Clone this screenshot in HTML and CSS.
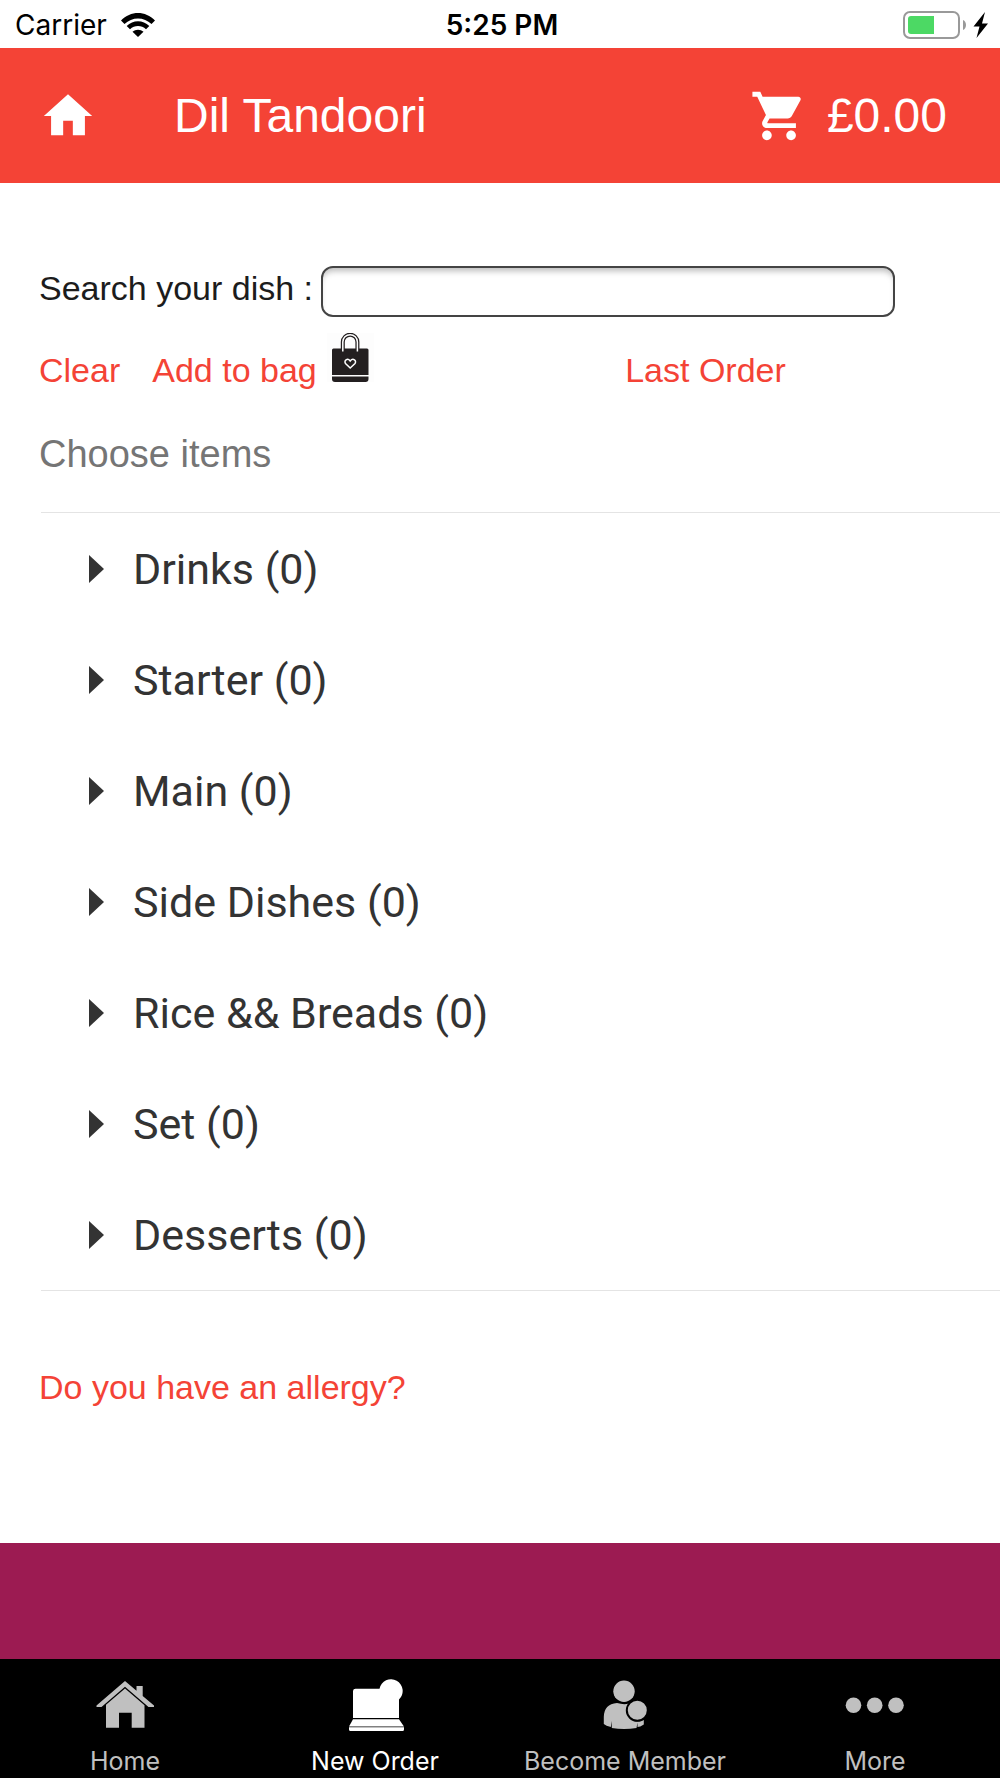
FILE: index.html
```
<!DOCTYPE html>
<html lang="en">
<head>
  <meta charset="UTF-8">
  <meta name="viewport" content="width=device-width, initial-scale=1.0">
  <title>Dil Tandoori</title>
  <link rel="stylesheet" href="styles.css">
</head>
<body>
  <div class="status-bar">
    <div class="status-left">
      <span>Carrier</span>
      <svg class="wifi" viewBox="0 0 34 24" aria-hidden="true">
        <path d="M0 7.5 C9.5 -2.5 24.500 -2.500 34 7.500 L30.500 11 C23 3.500 11 3.500 3.500 11 Z"/>
        <path d="M5.700 13 C12 6.500 22 6.500 28.300 13 L25 16.300 C20.500 12 13.500 12 9 16.300 Z"/>
        <path d="M11.500 18.700 C14.500 16 19.500 16 22.500 18.700 L17 24 Z"/>
      </svg>
    </div>
    <span class="status-time">5:25 PM</span>
    <div class="status-right">
      <svg class="battery" viewBox="0 0 86 28" aria-hidden="true">
        <rect x="1" y="1" width="55" height="26" rx="6" fill="none" stroke="#999" stroke-width="2"/>
        <path d="M31 5 V23 H8 a3 3 0 0 1 -3 -3 V8 a3 3 0 0 1 3 -3 Z" fill="#4cd964"/>
        <path d="M60 9 C64 10.500 64 17.500 60 19 Z" fill="#999"/>
        <path d="M82 1 L70.500 15.500 H76.500 L73.500 27 L85 12.500 H79 Z" fill="#000"/>
      </svg>
    </div>
  </div>

  <header class="app-header">
    <button class="home-btn" aria-label="Home">
      <svg class="icon" viewBox="0 0 24 24"><path d="M10 20v-6h4v6h5v-8h3L12 3 2 12h3v8z"/></svg>
    </button>
    <h1>Dil Tandoori</h1>
    <button class="cart-btn">
      <svg class="icon" viewBox="0 0 24 24" aria-hidden="true"><path d="M7 18c-1.100 0-1.990.9-1.990 2S5.900 22 7 22s2-.9 2-2-.9-2-2-2zM1 2v2h2l3.600 7.590-1.350 2.450c-.16.28-.25.61-.25.96 0 1.100.9 2 2 2h12v-2H7.420c-.14 0-.25-.11-.25-.25l.03-.12.9-1.630h7.450c.75 0 1.410-.41 1.750-1.030l3.580-6.490c.08-.14.12-.31.12-.48 0-.55-.45-1-1-1H5.210l-.94-2H1zm16 16c-1.100 0-1.990.9-1.990 2s.89 2 1.990 2 2-.9 2-2-.9-2-2-2z"/></svg>
      <span>£0.00</span>
    </button>
  </header>

  <main>
    <div class="search-row">
      <label for="dish">Search your dish :</label>
      <input type="text" id="dish">
    </div>
    <div class="actions">
      <div class="bag-actions">
        <a href="#">Clear</a>
        <a href="#" class="add-link">Add to bag
          <svg class="bag" viewBox="0 0 47 49" aria-hidden="true">
            <rect width="47" height="49" fill="#fdfdfd"/>
            <path d="M5 17 a1.500 1.500 0 0 1 1.500 -1.500 H40 a1.500 1.500 0 0 1 1.500 1.500 V42 H5 Z M5 43.500 H41.500 V46 a3 3 0 0 1 -3 3 H8 a3 3 0 0 1 -3 -3 Z" fill="#231f20"/>
            <path d="M15.800 18 V9 a7.200 7.200 0 0 1 14.600 0 V18" fill="none" stroke="#231f20" stroke-width="4"/>
            <path d="M15.800 18.500 V9 a7.200 7.200 0 0 1 14.600 0 V18.500" fill="none" stroke="#fff" stroke-width="1.500"/>
            <path d="M23.200 35 L18.500 30.500 C16.500 27.500 20.500 24.500 23.200 28 C26 24.500 30 27.500 28 30.500 Z" fill="none" stroke="#fff" stroke-width="1.500"/>
          </svg>
        </a>
      </div>
      <a href="#">Last Order</a>
    </div>

    <h2>Choose items</h2>
    <ul class="menu-list">
      <li><button>Drinks (0)</button></li>
      <li><button>Starter (0)</button></li>
      <li><button>Main (0)</button></li>
      <li><button>Side Dishes (0)</button></li>
      <li><button>Rice &amp;&amp; Breads (0)</button></li>
      <li><button>Set (0)</button></li>
      <li><button>Desserts (0)</button></li>
    </ul>

    <a href="#" class="allergy">Do you have an allergy?</a>
  </main>

  <div class="banner"></div>

  <nav class="tab-bar">
    <a href="#">
      <svg viewBox="0 0 64 60" aria-hidden="true">
        <path d="M32 6 L43.500 15.700 V11 H49.700 V21 L61 30.500 V32 H55.500 L32 11.700 L8.500 32 H3.500 V30.500 Z"/>
        <path d="M32 13.500 L51.500 30.300 V52.700 H38.700 V37.700 H26 V52.700 H13 V29.800 Z"/>
      </svg>
      Home
    </a>
    <a href="#" class="active">
      <svg viewBox="0 0 64 60" aria-hidden="true">
        <path d="M12.500 13.700 H36.500 A11.700 11.700 0 1 1 56 24.500 V43 H10 V16 a2.500 2.500 0 0 1 2.500 -2.300 Z"/>
        <path d="M10 44.200 H56 L61 51.500 H6 Z"/>
        <path d="M6 52.300 H61 V54.500 a1.500 1.500 0 0 1 -1.500 1.500 H7.500 a1.500 1.500 0 0 1 -1.500 -1.500 Z"/>
      </svg>
      New Order
    </a>
    <a href="#">
      <svg viewBox="0 0 64 60" aria-hidden="true">
        <path d="M24 28 Q31 30 36 28.500 A11.300 11.300 0 0 0 44 46.500 L50.800 45 V49.500 Q47 52 44.500 52 V47.500 L43.500 53 Q31 55 18.800 53 L18.500 46 L17.800 52 Q13 51 10.800 49 V42 Q11 29 24 28 Z"/>
        <circle cx="31" cy="16.300" r="10.700"/>
        <circle cx="44.300" cy="35.300" r="10.500" class="ring"/>
      </svg>
      Become Member
    </a>
    <a href="#">
      <svg viewBox="0 0 64 60" aria-hidden="true">
        <circle cx="10.500" cy="30.300" r="7.800"/>
        <circle cx="31.700" cy="30.300" r="7.800"/>
        <circle cx="53" cy="30.300" r="7.800"/>
      </svg>
      More
    </a>
  </nav>
</body>
</html>
```
FILE: styles.css
```
:root {
  --red: #f44336;
  --plum: #9c1b52;
  --side: 39px;
}
*, *::before, *::after { box-sizing: border-box; }
body {
  margin: 0;
  min-height: 100vh;
  display: flex;
  flex-direction: column;
  font-family: "Liberation Sans", Arial, sans-serif;
  font-size: 34px;
  line-height: 40px;
  color: #1c1c1c;
  background: #fff;
}
a { color: var(--red); text-decoration: none; }
button { font: inherit; color: inherit; background: none; border: none; padding: 0; cursor: pointer; }
svg { display: block; flex: none; }

/* Status bar */
.status-bar {
  display: grid;
  grid-template-columns: 1fr auto 1fr;
  align-items: center;
  height: 48px;
  padding: 2px 11px 0 15px;
  font-family: Inter, sans-serif;
  font-size: 28px;
  color: #000;
}
.status-left { display: flex; align-items: center; gap: 14px; }
.status-time { font-weight: 600; }
.status-right { display: flex; justify-content: flex-end; }
.wifi { width: 34px; height: 24px; }
.battery { width: 86px; height: 28px; }

/* Header */
.app-header {
  display: flex;
  align-items: center;
  height: 135px;
  padding: 0 53px 0 var(--side);
  background: var(--red);
  color: #fff;
  font-size: 48px;
}
.app-header h1 { flex: 1; margin: 0 0 0 77px; font-size: 48px; font-weight: normal; line-height: 56px; }
.icon { width: 58px; height: 58px; fill: currentColor; }
.cart-btn { display: flex; align-items: center; gap: 19px; line-height: 56px; }

/* Content */
main { flex: 1; padding: 83px 0 40px var(--side); }
.search-row { display: flex; align-items: flex-start; gap: 8px; padding-right: 105px; }
.search-row label { line-height: 44px; }
.search-row input {
  flex: 1;
  min-width: 0;
  height: 51px;
  padding: 0 12px;
  font: inherit;
  border: 2px solid #444;
  border-radius: 12px;
  background: #fff;
  box-shadow: inset 0 6px 6px -3px #bbb;
}
.actions { display: grid; grid-template-columns: 61% 1fr; align-items: baseline; margin-top: 16px; }
.bag-actions { display: flex; align-items: baseline; gap: 32px; }
.add-link { display: flex; align-items: baseline; gap: 10px; }
.bag { width: 47px; height: 49px; }
h2 { margin: 41px 0 35px; font-size: 38px; line-height: 46px; font-weight: normal; color: #757575; }

.menu-list {
  list-style: none;
  margin: 0 0 0 2px;
  padding: 0;
  border-top: 1px solid #e4e4e4;
  border-bottom: 1px solid #e4e4e4;
}
.menu-list button {
  display: flex;
  align-items: center;
  gap: 29px;
  width: 100%;
  height: 111px;
  padding-left: 48px;
  font-family: Roboto, sans-serif;
  font-size: 43px;
  line-height: 52px;
  color: #333;
}
.menu-list button::before {
  content: "";
  border: 14px solid transparent;
  border-left: 15px solid #333;
  border-right: none;
}
.allergy { display: inline-block; margin-top: 76px; }

.banner { height: 116px; background: var(--plum); }

/* Bottom tabs */
.tab-bar {
  display: grid;
  grid-template-columns: repeat(4, 1fr);
  height: 119px;
  padding-top: 16px;
  background: #000;
  font-family: Inter, sans-serif;
  font-size: 25px;
  line-height: 28px;
}
.tab-bar a { display: flex; flex-direction: column; align-items: center; gap: 12px; color: #c0c0c0; white-space: nowrap; }
.tab-bar a.active { color: #fff; }
.tab-bar svg { width: 64px; height: 60px; fill: currentColor; }
.tab-bar .ring { stroke: #000; stroke-width: 2px; }
```
